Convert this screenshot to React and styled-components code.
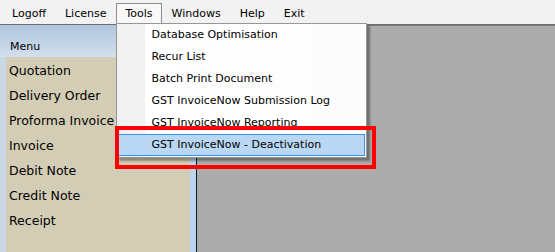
import React from 'react'
import styled, { createGlobalStyle } from 'styled-components'

const GlobalStyle = createGlobalStyle`
  html, body {
    margin: 0;
    padding: 0;
    width: 555px;
    height: 252px;
    overflow: hidden;
    font-family: "DejaVu Sans", Tahoma, sans-serif;
    color: #000;
  }
`

const menuItems = ['Logoff', 'License', 'Tools', 'Windows', 'Help', 'Exit']

const toolItems = [
  'Database Optimisation',
  'Recur List',
  'Batch Print Document',
  'GST InvoiceNow Submission Log',
  'GST InvoiceNow Reporting',
  'GST InvoiceNow - Deactivation',
]

const sideItems = [
  'Quotation',
  'Delivery Order',
  'Proforma Invoice',
  'Invoice',
  'Debit Note',
  'Credit Note',
  'Receipt',
]

export default function App() {
  return (
    <>
      <GlobalStyle />
      <Window>
        <MenuBar>
          {menuItems.map((m) => (
            <MenuEntry key={m} $open={m === 'Tools'}>
              {m}
              {m === 'Tools' && (
                <Dropdown>
                  {toolItems.map((t, i) => (
                    <DropItem key={t} $active={i === toolItems.length - 1}>
                      {t}
                    </DropItem>
                  ))}
                </Dropdown>
              )}
            </MenuEntry>
          ))}
        </MenuBar>
        <Body>
          <Sidebar>
            <SideHeader>Menu</SideHeader>
            <SideList>
              {sideItems.map((s) => (
                <SideItem key={s}>{s}</SideItem>
              ))}
            </SideList>
          </Sidebar>
          <Splitter />
          <Workspace />
        </Body>
        <Callout />
      </Window>
    </>
  )
}

const Window = styled.div`
  position: relative;
  width: 555px;
  height: 252px;
  display: flex;
  flex-direction: column;
  background: #ababab;
`

const MenuBar = styled.div`
  display: flex;
  align-items: flex-end;
  gap: 1px;
  height: 25px;
  padding-left: 3px;
  background: #f2f2f2;
  border-bottom: 1px solid #6d6d6d;
  font-size: 11px;
  box-sizing: border-box;
  position: relative;
  z-index: 2;
`

const MenuEntry = styled.div`
  position: relative;
  height: 21px;
  line-height: 20px;
  padding: 0 8px;
  box-sizing: border-box;
  border: 1px solid ${(p) => (p.$open ? '#8c8c8c' : 'transparent')};
  border-bottom: none;
  background: ${(p) => (p.$open ? '#f8f8f8' : 'transparent')};
  white-space: nowrap;
`

const Dropdown = styled.div`
  position: absolute;
  left: -1px;
  top: 19px;
  width: 251px;
  padding: 0 0 1px;
  box-sizing: border-box;
  background: linear-gradient(to right, #f1f1f1 0, #f3f3f3 27px, #e6e6e6 27px, #ffffff 28px, #fcfcfc 100%);
  border: 1px solid #979797;
  box-shadow: 3px 3px 2px rgba(0, 0, 0, 0.35);
  display: flex;
  flex-direction: column;
`

const DropItem = styled.div`
  height: 22px;
  line-height: 20px;
  margin: 0 1px;
  padding-left: 32px;
  box-sizing: border-box;
  border: 1px solid ${(p) => (p.$active ? '#3d93dd' : 'transparent')};
  background: ${(p) => (p.$active ? '#b9d7f3' : 'transparent')};
  white-space: nowrap;
`

const Body = styled.div`
  flex: 1;
  display: flex;
  min-height: 0;
`

const Sidebar = styled.div`
  width: 190px;
  display: flex;
  flex-direction: column;
  background: #c9d7e7;
  padding-left: 6px;
  box-sizing: border-box;
`

const SideHeader = styled.div`
  height: 32px;
  margin-left: -6px;
  padding: 15px 0 0 10px;
  box-sizing: border-box;
  font-size: 11px;
  background: linear-gradient(#afc5df, #d3dfec);
`

const SideList = styled.div`
  flex: 1;
  background: #d4cdb5;
  display: flex;
  flex-direction: column;
  padding: 1px 0 0 3px;
  font-size: 12.5px;
`

const SideItem = styled.div`
  height: 25px;
  line-height: 25px;
  white-space: nowrap;
`

const Splitter = styled.div`
  width: 7px;
  background: #bcd4ee;
  border-right: 1px solid #0b1d24;
  box-sizing: border-box;
`

const Workspace = styled.div`
  flex: 1;
  background: #ababab;
  border-top: 1px solid #7a7a7a;
`

const Callout = styled.div`
  position: absolute;
  left: 115px;
  top: 126px;
  width: 261px;
  height: 43px;
  border: 4px solid #ff0000;
  box-sizing: border-box;
  z-index: 3;
`
